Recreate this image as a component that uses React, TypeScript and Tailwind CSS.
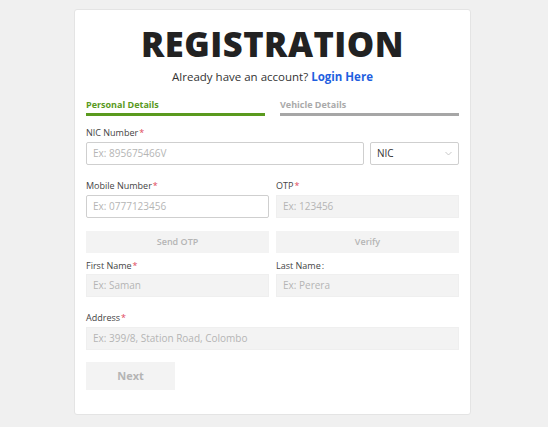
import React from "react";

const font = { fontFamily: '"Open Sans", "Noto Sans", sans-serif' };

function Label({ text, req = true, colon = false }: { text: string; req?: boolean; colon?: boolean }) {
  return (
    <div className="text-[9px] leading-[14px] text-[#444]">
      {text}
      {req && <span className="text-[#e0475b] ml-[1px]">*</span>}
      {colon && <span className="ml-[1px]">:</span>}
    </div>
  );
}

function Input({ ph, disabled = false }: { ph: string; disabled?: boolean }) {
  return (
    <div
      className={
        "h-[23px] flex items-center px-[6px] text-[10px] text-[#b5b5b5] border " +
        (disabled ? "bg-[#f3f3f3] border-[#efefef]" : "bg-white border-[#cfcfcf] rounded-[2px]")
      }
    >
      {ph}
    </div>
  );
}

export default function App() {
  return (
    <div style={font} className="w-[548px] h-[427px] bg-[#f0f0f0] overflow-hidden pt-[9px]">
      <div className="ml-[74px] w-[397px] h-[406px] bg-white border border-[#e4e4e4] rounded-[3px] px-[11px]">
        <div className="text-center font-extrabold text-[34.5px] leading-[36px] text-[#222] tracking-[0.5px] mt-[16px]">
          REGISTRATION
        </div>
        <div className="text-center text-[11.5px] leading-[16px] text-[#333] mt-[7px]">
          Already have an account? <span className="text-[#1f5fe0] font-bold">Login Here</span>
        </div>
        <div className="flex gap-[15px] mt-[13px]">
          <div className="w-[179px]">
            <div className="text-[9px] leading-[13px] font-bold text-[#5a9a1e]">Personal Details</div>
            <div className="h-[3px] bg-[#5a9a1e] mt-[2px]" />
          </div>
          <div className="w-[179px]">
            <div className="text-[9px] leading-[13px] font-bold text-[#aaa]">Vehicle Details</div>
            <div className="h-[3px] bg-[#a6a6a6] mt-[2px]" />
          </div>
        </div>

        <div className="mt-[10px]">
          <Label text="NIC Number" />
          <div className="flex gap-[6px] mt-[2px]">
            <div className="w-[278px]">
              <Input ph="Ex: 895675466V" />
            </div>
            <div className="w-[89px] h-[23px] border border-[#cfcfcf] rounded-[2px] flex items-center justify-between px-[6px]">
              <span className="text-[10px] text-[#333]">NIC</span>
              <svg width="7" height="5" viewBox="0 0 7 5" fill="none">
                <path d="M0.5 1l3 3 3-3" stroke="#bbb" strokeWidth="0.8" />
              </svg>
            </div>
          </div>
        </div>

        <div className="grid grid-cols-2 gap-x-[7px] mt-[14px]">
          <div>
            <Label text="Mobile Number" />
            <div className="mt-[2px]">
              <Input ph="Ex: 0777123456" />
            </div>
          </div>
          <div>
            <Label text="OTP" />
            <div className="mt-[2px]">
              <Input ph="Ex: 123456" disabled />
            </div>
          </div>
        </div>

        <div className="grid grid-cols-2 gap-x-[7px] mt-[13px]">
          <div className="h-[22px] bg-[#f3f3f3] flex items-center justify-center text-[9px] font-semibold text-[#b5b5b5]">
            Send OTP
          </div>
          <div className="h-[22px] bg-[#f3f3f3] flex items-center justify-center text-[9px] font-semibold text-[#b5b5b5]">
            Verify
          </div>
        </div>

        <div className="grid grid-cols-2 gap-x-[7px] mt-[6px]">
          <div>
            <Label text="First Name" />
            <div className="mt-[1px]">
              <Input ph="Ex: Saman" disabled />
            </div>
          </div>
          <div>
            <Label text="Last Name" req={false} colon />
            <div className="mt-[1px]">
              <Input ph="Ex: Perera" disabled />
            </div>
          </div>
        </div>

        <div className="mt-[14px]">
          <Label text="Address" />
          <div className="mt-[2px]">
            <Input ph="Ex: 399/8, Station Road, Colombo" disabled />
          </div>
        </div>

        <div className="mt-[12px] w-[89px] h-[28px] bg-[#f3f3f3] flex items-center justify-center text-[11px] font-bold text-[#b5b5b5]">
          Next
        </div>
      </div>
    </div>
  );
}
